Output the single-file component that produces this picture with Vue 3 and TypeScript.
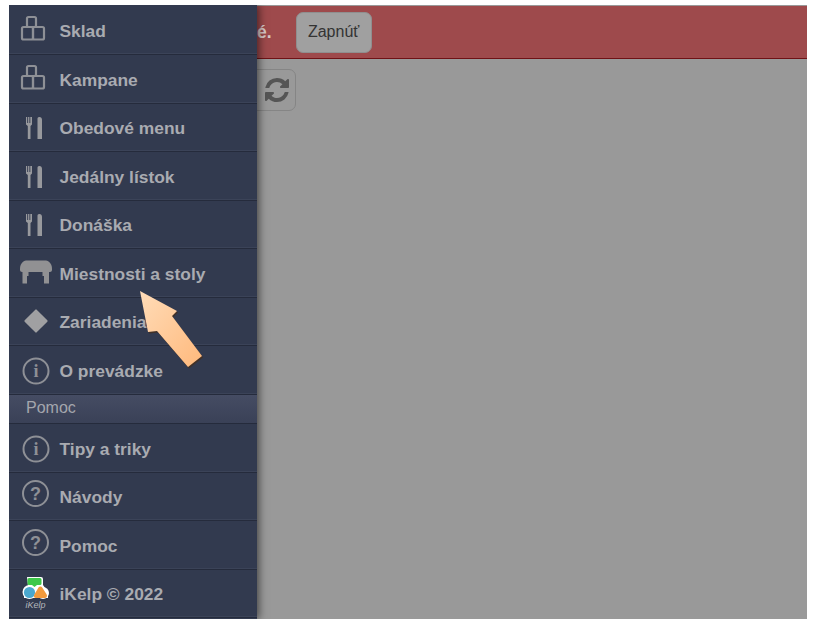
<script setup lang="ts">
type Item = { label: string; icon: string; header?: boolean }

const items: Item[] = [
  { label: 'Sklad', icon: 'boxes' },
  { label: 'Kampane', icon: 'boxes' },
  { label: 'Obedové menu', icon: 'cutlery' },
  { label: 'Jedálny lístok', icon: 'cutlery' },
  { label: 'Donáška', icon: 'cutlery' },
  { label: 'Miestnosti a stoly', icon: 'table' },
  { label: 'Zariadenia', icon: 'diamond' },
  { label: 'O prevádzke', icon: 'info' },
  { label: 'Pomoc', icon: '', header: true },
  { label: 'Tipy a triky', icon: 'info' },
  { label: 'Návody', icon: 'help' },
  { label: 'Pomoc', icon: 'help' },
  { label: 'iKelp © 2022', icon: 'logo' },
]
</script>

<template>
  <div class="page">
    <div class="frame">
      <div class="alert">
        <strong class="alert_text">é.</strong>
        <button class="alert_btn">Zapnúť</button>
      </div>
      <div class="toolbar">
        <button class="refresh">
          <svg width="24" height="24" viewBox="0 0 1536 1536">
            <path fill="#555" d="M1511 928q0 5-1 7-64 268-268 434.5t-478 166.5q-146 0-282.5-55t-243.5-157l-129 129q-19 19-45 19t-45-19-19-45v-448q0-26 19-45t45-19h448q26 0 45 19t19 45-19 45l-137 137q71 66 161 102t187 36q134 0 250-65t186-179q11-17 53-117 8-23 30-23h192q13 0 22.5 9.5t9.5 22.5zm25-800v448q0 26-19 45t-45 19h-448q-26 0-45-19t-19-45 19-45l138-138q-148-137-349-137-134 0-250 65t-186 179q-11 17-53 117-8 23-30 23h-199q-13 0-22.5-9.5t-9.5-22.5v-7q65-268 270-434.5t480-166.5q146 0 284 55.5t245 156.5l130-129q19-19 45-19t45 19 19 45z"/>
          </svg>
        </button>
      </div>

      <nav class="menu">
        <template v-for="item in items" :key="item.label + item.icon">
          <div v-if="item.header" class="menu_header">{{ item.label }}</div>
          <a v-else class="menu_item">
            <svg class="menu_icon" width="34" height="34" viewBox="0 0 34 34">
              <g v-if="item.icon == 'boxes'" fill="none" stroke="#8e9096" stroke-width="2.200">
                <rect x="8" y="4" width="9" height="10" rx="1.500"/>
                <rect x="3" y="14" width="11" height="12.500" rx="1.500"/>
                <rect x="14" y="14" width="11" height="12.500" rx="1.500"/>
              </g>
              <g v-else-if="item.icon == 'cutlery'" fill="#98999d">
                <path d="M7 7h1.200v6h.9V7h1.300v6h.9V7H13v7.500l-1.500 1.500V29H8.800V16L7 14.500z"/>
                <path d="M18.500 29V8.500C18.500 7.500 19.500 7 20.500 7c1.500 0 2.500 1 2.500 3v19z"/>
              </g>
              <g v-else-if="item.icon == 'table'" fill="#919193">
                <path d="M7 4.500h20c3 0 6 4 6 8v1.500c0 1-1 2-2 2H3c-1 0-2-1-2-2v-1.500c0-4 3-8 6-8z"/>
                <rect x="3.500" y="15" width="4.500" height="12.500"/>
                <rect x="25" y="15" width="5" height="12.500"/>
                <rect x="8" y="15" width="1.500" height="5"/>
                <rect x="23.500" y="15" width="1.500" height="5"/>
              </g>
              <rect v-else-if="item.icon == 'diamond'" x="8.500" y="8.500" width="17" height="17" rx="1" fill="#a0a0a2" transform="rotate(45 17 17)"/>
              <g v-else-if="item.icon == 'info'">
                <circle cx="17" cy="18" r="12.500" fill="none" stroke="#8e9096" stroke-width="2"/>
                <text x="17" y="24" text-anchor="middle" class="glyph_i">i</text>
              </g>
              <g v-else-if="item.icon == 'help'">
                <circle cx="16.500" cy="14.500" r="12.500" fill="none" stroke="#8e9096" stroke-width="2"/>
                <text x="16.500" y="20.500" text-anchor="middle" class="glyph_q">?</text>
              </g>
              <g v-else-if="item.icon == 'logo'">
                <path d="M8 1h14a2 2 0 0 1 2 2v6l5 7v6H5v-6l4-6z" fill="#fff"/>
                <circle cx="10.500" cy="16" r="7" fill="#fff"/>
                <circle cx="24" cy="17" r="6" fill="#fff"/>
                <path d="M10 2h11a1.500 1.500 0 0 1 1.500 1.500v4a1.500 1.500 0 0 1-1.500 1.500h-3l-2.500 2-2.500-2h-3a1.500 1.500 0 0 1-1.500-1.500v-4A1.500 1.500 0 0 1 10 2z" fill="#3ec84a"/>
                <circle cx="10.500" cy="16.500" r="5.600" fill="#4aa8cf"/>
                <path d="M21.500 10.500c.8 0 1.300.4 1.700 1l4.500 7c.9 1.500 0 3.500-1.800 3.500H17c-1.800 0-2.700-1.700-1.800-3.300l4.300-7.200c.4-.6 1.200-1 2-1z" fill="#f29a3d"/>
                <text x="16.500" y="31.500" text-anchor="middle" class="logo_text">iKelp</text>
              </g>
            </svg>
            <span class="menu_label">{{ item.label }}</span>
          </a>
        </template>
      </nav>

      <svg class="arrow" width="90" height="90" viewBox="0 0 90 90">
        <defs>
          <linearGradient id="arrow_fill" x1="0" y1="0" x2="1" y2="1">
            <stop offset="0" stop-color="#ffdcb8"/>
            <stop offset="1" stop-color="#ffb97c"/>
          </linearGradient>
        </defs>
        <path d="M11 3 L48 23 L43 28 L73 68 L59 79 L28 43 L19 44 Z" fill="#4a2c14" opacity=".65" transform="translate(1 1.500)"/>
        <path d="M11 3 L48 23 L43 28 L73 68 L59 79 L28 43 L19 44 Z" fill="url(#arrow_fill)"/>
      </svg>
    </div>
  </div>
</template>

<style scoped>
.page{
  width: 818px;
  height: 624px;
  box-sizing: border-box;
  padding: 5px 11px 5px 9px;
  background: #fff;
  font-family: "Liberation Sans", Arial, sans-serif;
}

.frame{
  position: relative;
  height: 614px;
  padding-top: 1px;
  box-sizing: border-box;
  background: #999;
  overflow: hidden;
}

.alert{
  display: flex;
  align-items: center;
  gap: 24px;
  height: 53px;
  box-sizing: border-box;
  padding-left: 248px;
  background: #9e4a4c;
  border-bottom: 1px solid #6f1216;
}

.alert_text{
  font-size: 17.500px;
  color: #d8c8c8;
}

.alert_btn{
  width: 76px;
  height: 41px;
  padding: 0;
  border: 1px solid #8f8f8f;
  border-radius: 7px;
  background: #a0a0a0;
  font-family: inherit;
  font-size: 16px;
  color: #333;
}

.toolbar{
  padding: 10px 0 0 239px;
}

.refresh{
  display: flex;
  align-items: center;
  justify-content: center;
  width: 48px;
  height: 42px;
  padding: 0 0 0 10px;
  border: 1px solid #858585;
  border-radius: 7px;
  background: #999;
}

.menu{
  position: absolute;
  left: 0;
  top: 0;
  width: 248px;
  height: 614px;
  padding-top: 1.500px;
  box-sizing: border-box;
  background: #323a4f;
  box-shadow: 2px 0 8px rgba(0, 0, 0, .55);
}

.menu_item{
  display: flex;
  align-items: center;
  height: 48.500px;
  box-sizing: border-box;
  border-bottom: 1px solid #252b3c;
  box-shadow: inset 0 -1px 0 #3b4358;
}

.menu_icon{
  flex: none;
  margin-left: 10px;
  margin-right: 6.500px;
}

.menu_label{
  padding-top: 3px;
  font-size: 17.400px;
  font-weight: bold;
  color: #a9abb1;
}

.menu_header{
  display: flex;
  align-items: center;
  height: 29.500px;
  box-sizing: border-box;
  padding-left: 17px;
  padding-bottom: 2px;
  font-size: 16px;
  color: #a4a6ad;
  background: linear-gradient(#454c63, #3a4157);
  border-bottom: 1px solid #252b3c;
}

.glyph_i{
  font-family: "Liberation Serif", serif;
  font-weight: bold;
  font-size: 18px;
  fill: #8e9096;
}

.glyph_q{
  font-family: "Liberation Sans", sans-serif;
  font-weight: bold;
  font-size: 18px;
  fill: #8e9096;
}

.logo_text{
  font-family: "Liberation Sans", sans-serif;
  font-style: italic;
  font-size: 9px;
  fill: #b5b7bd;
}

.arrow{
  position: absolute;
  left: 120px;
  top: 283px;
}
</style>
